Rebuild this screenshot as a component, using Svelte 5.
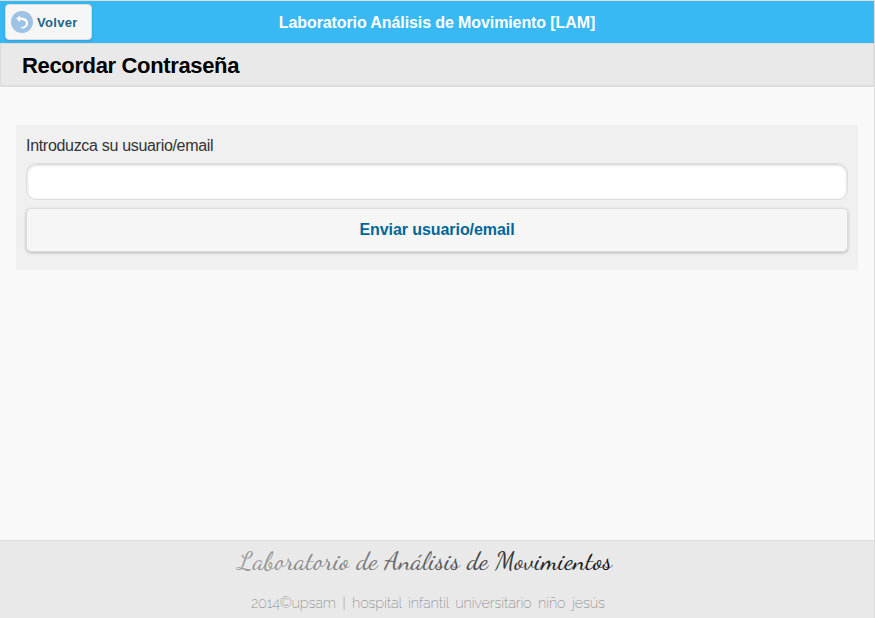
<script>
  let user = $state('');
</script>

<div class="page">
  <header class="bar">
    <button class="back" type="button">
      <svg width="22" height="22" viewBox="0 0 22 22" aria-hidden="true">
        <circle cx="11" cy="11" r="11" fill="#9ec2e3" />
        <path d="M5.3 7.7 L9 4.2 V6.6 C13.7 6.4 17.1 8.6 17.1 12 C17.1 15.2 14.1 17.8 10.2 17.6 V16.2 C12.9 16 15 14.5 15 12.3 C15 10.1 12.7 8.7 9 8.9 V11.2 Z" fill="#fff" />
      </svg>
      <span>Volver</span>
    </button>
    <h1>Laboratorio Análisis de Movimiento [LAM]</h1>
  </header>
  <div class="sub"><h2>Recordar Contraseña</h2></div>
  <main>
    <form>
      <label for="user">Introduzca su usuario/email</label>
      <input id="user" type="text" bind:value={user} />
      <button class="send" type="button">Enviar usuario/email</button>
    </form>
  </main>
  <footer>
    <svg width="874" height="77" viewBox="0 0 874 77">
      <defs>
        <linearGradient id="ink" gradientUnits="userSpaceOnUse" x1="238" y1="0" x2="612" y2="0">
          <stop offset="0" stop-color="#999" />
          <stop offset="0.35" stop-color="#777" />
          <stop offset="0.7" stop-color="#3a3a3a" />
          <stop offset="1" stop-color="#0c0c0c" />
        </linearGradient>
      </defs>
      <text class="brand" x="238" y="28" textLength="374" fill="url(#ink)">Laboratorio de Análisis de Movimientos</text>
      <text class="credit" x="251" y="67" textLength="354">2014©upsam | hospital infantil universitario niño jesús</text>
    </svg>
  </footer>
</div>

<style>
  :global(body) {
    margin: 0;
    overflow: hidden;
  }
  .page {
    box-sizing: border-box;
    display: flex;
    flex-direction: column;
    width: 875px;
    height: 618px;
    border-right: 1px solid #ddd;
    background: #f9f9f9;
    font-family: 'Liberation Sans', Arial, sans-serif;
  }
  .bar {
    box-sizing: border-box;
    display: grid;
    grid-template-columns: 87px 1fr 87px;
    align-items: center;
    height: 44px;
    padding: 0 5px;
    border-top: 1px solid #ddd;
    border-bottom: 1px solid #ddd;
    background: #38b9f3;
  }
  .back {
    box-sizing: border-box;
    display: flex;
    align-items: center;
    gap: 4px;
    width: 87px;
    height: 36px;
    padding: 0 5px;
    border: 1px solid #ddd;
    border-radius: 4px;
    background: #f6f6f6;
    box-shadow: 0 1px 3px rgba(0, 0, 0, 0.15);
    color: #1c6590;
    font: bold 13px 'Liberation Sans', Arial, sans-serif;
    letter-spacing: 0.3px;
  }
  h1 {
    margin: 0;
    padding-top: 1px;
    color: #fff;
    font-size: 16px;
    line-height: 21px;
    letter-spacing: -0.1px;
    text-align: center;
    white-space: nowrap;
  }
  .sub {
    box-sizing: border-box;
    display: flex;
    align-items: center;
    height: 43px;
    padding: 2px 0 0 21px;
    border: 1px solid #ddd;
    border-top: 0;
    border-bottom-width: 2px;
    background: #e9e9e9;
  }
  h2 {
    margin: 0;
    color: #000;
    font-size: 22px;
    line-height: 26px;
    letter-spacing: -0.35px;
  }
  main {
    flex: 1;
    padding: 38px 16px 0;
  }
  form {
    box-sizing: border-box;
    display: flex;
    flex-direction: column;
    height: 145px;
    padding: 11px 10px 0;
    background: #f0f0f0;
  }
  label {
    color: #333;
    font-size: 16px;
    line-height: 20px;
    letter-spacing: -0.31px;
  }
  input {
    box-sizing: border-box;
    height: 37px;
    margin: 7px 0 0;
    padding: 0 8px;
    border: 1px solid #ddd;
    border-radius: 10px;
    outline: none;
    background: #fff;
    box-shadow: inset 0 1px 3px rgba(0, 0, 0, 0.2);
    font: 16px 'Liberation Sans', Arial, sans-serif;
  }
  .send {
    box-sizing: border-box;
    height: 44px;
    margin-top: 8px;
    padding: 0;
    border: 1px solid #ddd;
    border-radius: 5px;
    background: #f6f6f6;
    box-shadow: 0 1px 3px rgba(0, 0, 0, 0.25);
    color: #069;
    font: bold 16px 'Liberation Sans', Arial, sans-serif;
    letter-spacing: -0.07px;
  }
  footer {
    height: 77px;
    border-top: 1px solid #ddd;
    background: #e9e9e9;
  }
  footer svg {
    display: block;
  }
  .brand {
    font: 26px 'Dancing Script', 'Liberation Serif', cursive;
  }
  .credit {
    fill: #888;
    font: 200 14.5px Raleway, Lato, sans-serif;
    word-spacing: 3px;
  }
</style>
